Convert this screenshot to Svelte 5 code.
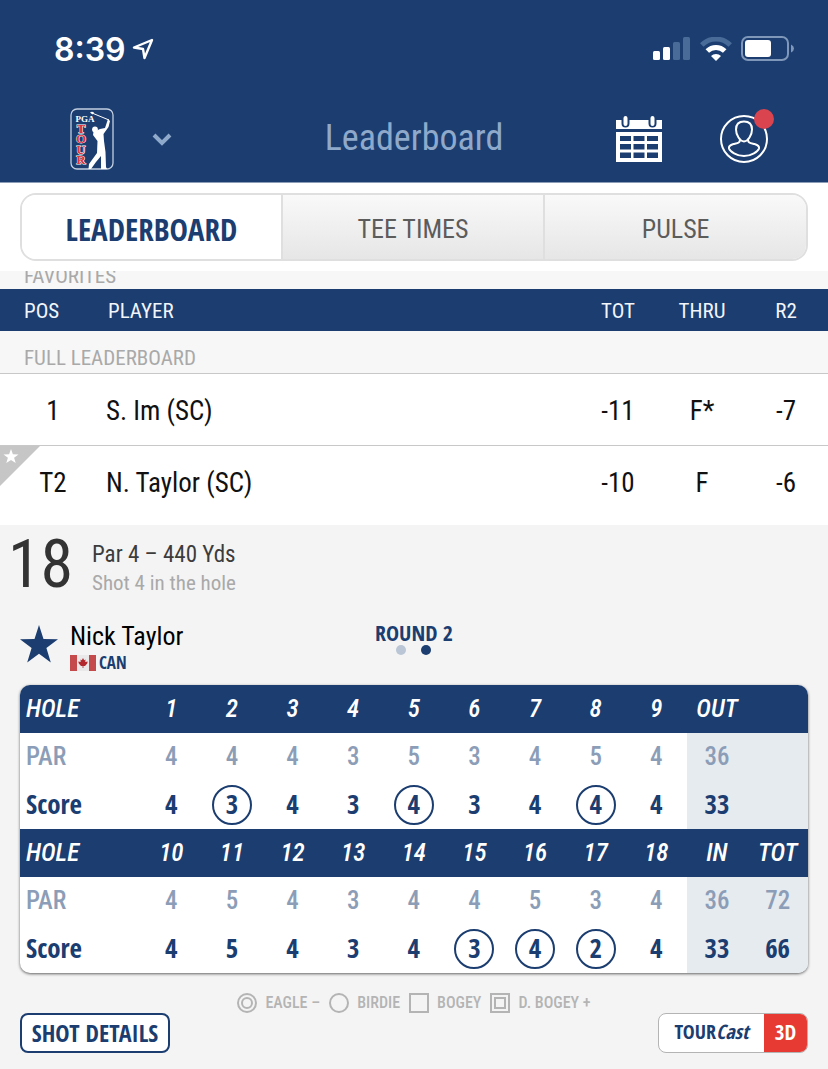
<script lang="ts">
  type Player = {
    pos: string;
    name: string;
    total: string;
    thru: string;
    round: string;
    favorite?: boolean;
  };

  type Nine = {
    holes: number[];
    par: number[];
    score: number[];
    label: string;
    parSum: number;
    scoreSum: number;
    parTotal?: number;
    scoreTotal?: number;
  };

  const tabs = ["LEADERBOARD", "TEE TIMES", "PULSE"];
  let activeTab = $state("LEADERBOARD");

  const rounds = [1, 2];
  let round = $state(2);

  const players: Player[] = [
    { pos: "1", name: "S. Im (SC)", total: "-11", thru: "F*", round: "-7" },
    { pos: "T2", name: "N. Taylor (SC)", total: "-10", thru: "F", round: "-6", favorite: true },
  ];

  const nines: Nine[] = [
    {
      holes: [1, 2, 3, 4, 5, 6, 7, 8, 9],
      par: [4, 4, 4, 3, 5, 3, 4, 5, 4],
      score: [4, 3, 4, 3, 4, 3, 4, 4, 4],
      label: "OUT",
      parSum: 36,
      scoreSum: 33,
    },
    {
      holes: [10, 11, 12, 13, 14, 15, 16, 17, 18],
      par: [4, 5, 4, 3, 4, 4, 5, 3, 4],
      score: [4, 5, 4, 3, 4, 3, 4, 2, 4],
      label: "IN",
      parSum: 36,
      scoreSum: 33,
      parTotal: 72,
      scoreTotal: 66,
    },
  ];
</script>

<div class="app">
  <header>
    <div class="status">
      <div class="clock">
        <span>8:39</span>
        <svg width="22" height="22" viewBox="0 0 22 22" aria-hidden="true">
          <path d="M20 2 L2 9.5 L11 11 L12.500 20 Z" fill="none" stroke="#fff" stroke-width="2.400" stroke-linejoin="round" />
        </svg>
      </div>
      <div class="signals">
        <svg width="38" height="24" viewBox="0 0 38 24" aria-hidden="true">
          <rect x="0" y="14" width="7" height="9" rx="1.500" fill="#fff" />
          <rect x="10" y="10" width="7" height="13" rx="1.500" fill="#fff" />
          <rect x="20" y="5" width="7" height="18" rx="1.500" fill="#486b98" />
          <rect x="30" y="0" width="7" height="23" rx="1.500" fill="#486b98" />
        </svg>
        <svg width="32" height="24" viewBox="0 0 32 24" aria-hidden="true">
          <path d="M1.800 8 A20 20 0 0 1 30.200 8" fill="none" stroke="#486b98" stroke-width="5" />
          <path d="M7.300 14 A12.500 12.500 0 0 1 24.700 14" fill="none" stroke="#fff" stroke-width="5" />
          <path d="M16 24 L11 19 A7 7 0 0 1 21 19 Z" fill="#fff" />
        </svg>
        <svg width="53" height="26" viewBox="0 0 53 26" aria-hidden="true">
          <rect x="1" y="1" width="46" height="23" rx="6" fill="none" stroke="#7f98b9" stroke-width="2" />
          <rect x="4" y="4" width="26" height="17" rx="3" fill="#fff" />
          <path d="M50 8.500 Q53 10 53 12.500 Q53 15 50 16.500 Z" fill="#7f98b9" />
        </svg>
      </div>
    </div>

    <div class="bar">
      <button class="brand" aria-label="Choose tour">
        <svg width="44" height="62" viewBox="0 0 44 62" aria-hidden="true">
          <rect x="1" y="1" width="42" height="60" rx="6" fill="none" stroke="#c3cfe0" stroke-width="1.300" />
          <g font-family="'Liberation Serif', serif" font-weight="bold" text-anchor="middle">
            <text x="15" y="14" font-size="9" fill="#fff">PGA</text>
            <g font-size="13" fill="#e0313c" stroke="#fff" stroke-width="1" paint-order="stroke">
              <text x="11" y="25">T</text>
              <text x="11" y="35">O</text>
              <text x="11" y="46">U</text>
              <text x="11" y="56">R</text>
            </g>
          </g>
          <path d="M22 5 L39 12" fill="none" stroke="#fff" stroke-width="1" />
          <path d="M20 4.500 Q22 3 24 4.500 L22.500 6.500 Z" fill="#fff" />
          <circle cx="25" cy="21.500" r="2.900" fill="#fff" />
          <path d="M38 11 L40 13 L38.500 19 L33.500 26 L34 33 L35.500 44 L36 59 L37 61 L31 61 L31 48 L26 54 L21 61 L18.500 61 L19 56 L27 45 L27.500 33 L23 27 L23.500 24 L30 21 L35 20 L37 14 Z" fill="#fff" />
        </svg>
        <svg width="20" height="14" viewBox="0 0 20 14" aria-hidden="true">
          <path d="M2 3 L10 11 L18 3" fill="none" stroke="#8fa9cb" stroke-width="4" />
        </svg>
      </button>
      <h1>Leaderboard</h1>
      <div class="actions">
        <button aria-label="Schedule">
          <svg width="46" height="47" viewBox="0 0 46 47" aria-hidden="true">
            <rect x="0" y="4" width="46" height="9" fill="#fff" />
            <g stroke-linecap="round">
              <path d="M9.500 3 V7.500 M36.500 3 V7.500" stroke="#1b3d70" stroke-width="8" />
              <path d="M9.500 2 V8 M36.500 2 V8" stroke="#fff" stroke-width="4" />
            </g>
            <path fill-rule="evenodd" fill="#fff" d="M0 16 H46 V46 H0 Z M4 20 V25 H15 V20 Z M17.500 20 V25 H28.500 V20 Z M31 20 V25 H42 V20 Z M4 28 V33.500 H15 V28 Z M17.500 28 V33.500 H28.500 V28 Z M31 28 V33.500 H42 V28 Z M4 36.500 V42 H15 V36.500 Z M17.500 36.500 V42 H28.500 V36.500 Z M31 36.500 V42 H42 V36.500 Z" />
          </svg>
        </button>
        <button class="profile" aria-label="Profile">
          <svg width="48" height="48" viewBox="0 0 48 48" aria-hidden="true">
            <g fill="none" stroke="#fff" stroke-width="2">
              <circle cx="24" cy="24" r="23" />
              <path d="M24 6.500 C18.500 6.500 16 10 16 14.500 C16 20 20 26.500 24 26.500 C28 26.500 32 20 32 14.500 C32 10 29.500 6.500 24 6.500 Z" />
              <path d="M20 24.500 C20 28 18 28 13.500 29 C10 30 8.500 31 9 33.500 C10 36.500 16.500 41 24 41 C31.500 41 38 36.500 39 33.500 C39.500 31 38 30 34.500 29 C30 28 28 28 28 24.500" />
            </g>
          </svg>
          <span class="badge"></span>
        </button>
      </div>
    </div>
  </header>

  <nav>
    <div class="tabs">
      {#each tabs as tab}
        <button class:active={activeTab === tab} onclick={() => (activeTab = tab)}>{tab}</button>
      {/each}
    </div>
  </nav>

  <!-- scrolled half under the tab bar -->
  <div class="favorites"><span>FAVORITES</span></div>

  <table class="board">
    <thead>
      <tr>
        <th class="pos">POS</th>
        <th class="player">PLAYER</th>
        <th>TOT</th>
        <th>THRU</th>
        <th>R2</th>
      </tr>
    </thead>
    <tbody>
      <tr class="section"><td colspan="5">FULL LEADERBOARD</td></tr>
      {#each players as p}
        <tr class="row" class:favorite={p.favorite}>
          <td class="pos">
            {#if p.favorite}
              <svg class="corner" width="40" height="40" viewBox="0 0 40 40" aria-hidden="true">
                <path d="M0 0 H40 L0 40 Z" fill="#c6c6c6" />
                <path d="M11 3 L12.900 8.200 L18.500 8.400 L14.100 11.800 L15.700 17.100 L11 14 L6.300 17.100 L7.900 11.800 L3.500 8.400 L9.100 8.200 Z" fill="#fff" />
              </svg>
            {/if}
            {p.pos}
          </td>
          <td class="player">{p.name}</td>
          <td>{p.total}</td>
          <td>{p.thru}</td>
          <td>{p.round}</td>
        </tr>
      {/each}
    </tbody>
  </table>

  <main>
    <section class="hole">
      <span class="number">18</span>
      <div class="lie">
        <p class="yards">Par 4 – 440 Yds</p>
        <p class="shot">Shot 4 in the hole</p>
      </div>
    </section>

    <section class="profile-row">
      <div class="who">
        <svg width="38" height="38" viewBox="0 0 38 38" aria-hidden="true">
          <path d="M19 0 L23.500 14 L38 14.300 L26.400 23 L30.800 37.500 L19 28.700 L7.200 37.500 L11.600 23 L0 14.300 L14.500 14 Z" fill="#1b3d70" />
        </svg>
        <div>
          <h2>Nick Taylor</h2>
          <div class="country">
            <svg width="26" height="16" viewBox="0 0 26 16" aria-hidden="true">
              <rect width="26" height="16" fill="#e9e9ea" />
              <rect width="7" height="16" fill="#c44a4c" />
              <rect x="19" width="7" height="16" fill="#c44a4c" />
              <path d="M13 3 L14.200 5.200 L15.500 4.600 L15.300 7 L17.700 6.500 L17.200 8.500 L15 11 H13.400 V13 H12.600 V11 H11 L8.800 8.500 L8.300 6.500 L10.700 7 L10.500 4.600 L11.800 5.200 Z" fill="#b3282d" />
            </svg>
            <span>CAN</span>
          </div>
        </div>
      </div>
      <div class="round">
        <span>ROUND {round}</span>
        <div class="dots">
          {#each rounds as r}
            <button class:active={r === round} onclick={() => (round = r)} aria-label="Round {r}"></button>
          {/each}
        </div>
      </div>
    </section>

    <table class="card">
      {#each nines as nine}
        <tbody>
          <tr class="holes">
            <th>HOLE</th>
            {#each nine.holes as h}<td>{h}</td>{/each}
            <td>{nine.label}</td>
            <td>{nine.parTotal ? "TOT" : ""}</td>
          </tr>
          <tr class="par">
            <th>PAR</th>
            {#each nine.par as v}<td>{v}</td>{/each}
            <td class="sum">{nine.parSum}</td>
            <td class="sum">{nine.parTotal ?? ""}</td>
          </tr>
          <tr class="score">
            <th>Score</th>
            {#each nine.score as v, i}
              <td><span class:birdie={v < nine.par[i]}>{v}</span></td>
            {/each}
            <td class="sum">{nine.scoreSum}</td>
            <td class="sum">{nine.scoreTotal ?? ""}</td>
          </tr>
        </tbody>
      {/each}
    </table>

    <ul class="legend">
      <li><i class="circle double"></i>EAGLE –</li>
      <li><i class="circle"></i>BIRDIE</li>
      <li><i></i>BOGEY</li>
      <li><i class="double"></i>D. BOGEY +</li>
    </ul>

    <div class="buttons">
      <button class="details">SHOT DETAILS</button>
      <button class="cast">
        <span class="cast-name">TOUR<em>Cast</em></span>
        <span class="cast-3d">3D</span>
      </button>
    </div>
  </main>
</div>

<style>
  :global(body) {
    margin: 0;
    background: #f4f4f4;
  }
  .app {
    --navy: #1b3d70;
    --grey: #a9a9a9;
    --bold: "Open Sans Condensed", "Roboto Condensed", sans-serif;
    font-family: "Roboto Condensed", "Open Sans Condensed", sans-serif;
    line-height: 1.2;
    color: #111;
  }
  button {
    padding: 0;
    border: 0;
    background: none;
    font: inherit;
    color: inherit;
    cursor: pointer;
  }
  svg {
    display: block;
  }
  h1,
  h2,
  p,
  ul {
    margin: 0;
    padding: 0;
    font-weight: 400;
  }
  header {
    background: var(--navy);
    border-bottom: 1px solid #8c9db7;
  }
  .status {
    display: flex;
    justify-content: space-between;
    align-items: center;
    height: 94px;
    padding: 2px 34px 0 54px;
  }
  .clock {
    display: flex;
    align-items: center;
    gap: 6px;
    color: #fff;
    font: 600 32px Inter, sans-serif;
  }
  .signals {
    display: flex;
    align-items: center;
    gap: 9px;
  }
  .bar {
    display: grid;
    grid-template-columns: 1fr auto 1fr;
    align-items: center;
    height: 86px;
    padding: 0 60px 0 70px;
  }
  .brand {
    display: flex;
    align-items: center;
    gap: 38px;
  }
  h1 {
    margin-right: 10px;
    color: #8fa9cb;
    font-size: 36px;
  }
  .actions {
    display: flex;
    justify-content: flex-end;
    align-items: center;
    gap: 58px;
  }
  .profile {
    position: relative;
  }
  .badge {
    position: absolute;
    top: -6px;
    right: -6px;
    width: 20px;
    height: 20px;
    border-radius: 50%;
    background: #d9444f;
  }
  nav {
    padding: 10px 20px;
    background: #fff;
  }
  .tabs {
    display: grid;
    grid-template-columns: 65fr 66fr 66fr;
    height: 64px;
    border: 2px solid #dfdfdf;
    border-radius: 16px;
    overflow: hidden;
  }
  .tabs button {
    background: linear-gradient(#f9f9f9, #e6e6e6);
    color: #5c5c5c;
    font-size: 26px;
    padding-top: 5px;
  }
  .tabs button + button {
    border-left: 2px solid #dfdfdf;
  }
  .tabs .active {
    background: #fff;
    color: var(--navy);
    font-family: var(--bold);
    font-size: 31px;
    font-weight: 700;
  }
  .favorites {
    display: flex;
    align-items: flex-end;
    height: 18px;
    padding: 0 24px;
    overflow: hidden;
    background: #f7f7f7;
    color: var(--grey);
    font-size: 21px;
    line-height: 26px;
  }
  table {
    width: 100%;
    border-collapse: collapse;
    table-layout: fixed;
  }
  th,
  td {
    padding: 0;
    font-weight: 400;
    text-align: center;
  }
  .board {
    background: #fff;
  }
  .board th {
    width: 84px;
    height: 42px;
    padding-top: 4px;
    box-sizing: border-box;
    background: var(--navy);
    color: #f2f5fa;
    font-size: 21px;
  }
  .board th.pos {
    width: 106px;
    padding-left: 24px;
    text-align: left;
  }
  .board th.player {
    width: auto;
    padding-left: 2px;
  }
  .board .player {
    text-align: left;
  }
  .section td {
    height: 42px;
    padding: 14px 24px 0;
    box-sizing: border-box;
    background: #f7f7f7;
    color: var(--grey);
    font-size: 21px;
    text-align: left;
  }
  .row td {
    height: 67px;
    padding-top: 4px;
    border-top: 1px solid #c8c8c8;
    font-size: 27px;
  }
  .row.favorite td {
    height: 75px;
    padding: 0 0 4px;
  }
  td.pos {
    position: relative;
  }
  .corner {
    position: absolute;
    top: 0;
    left: 0;
  }
  main {
    padding: 0 20px 16px;
    background: #f4f4f4;
  }
  .hole {
    display: flex;
    align-items: center;
    height: 80px;
    margin-left: -12px;
  }
  .number {
    width: 84px;
    color: #333;
    font-size: 66px;
  }
  .lie {
    padding-top: 6px;
  }
  .yards {
    color: #3c3c3c;
    font-size: 23px;
    line-height: 30px;
  }
  .shot {
    color: var(--grey);
    font-size: 21px;
    line-height: 26px;
  }
  .profile-row {
    display: grid;
    grid-template-columns: 1fr auto 1fr;
    height: 80px;
    padding-top: 14px;
    box-sizing: border-box;
  }
  .who {
    display: flex;
    align-items: flex-start;
    gap: 12px;
  }
  .who > svg {
    margin-top: 6px;
  }
  h2 {
    color: #000;
    font-size: 26px;
    line-height: 34px;
  }
  .country {
    display: flex;
    align-items: center;
    gap: 3px;
    color: var(--navy);
    font-family: var(--bold);
    font-size: 17px;
    font-weight: 700;
    line-height: 20px;
  }
  .round {
    color: var(--navy);
    font-family: var(--bold);
    font-size: 22px;
    font-weight: 700;
    line-height: 26px;
  }
  .dots {
    display: flex;
    justify-content: center;
    gap: 15px;
  }
  .dots button {
    width: 10px;
    height: 10px;
    border-radius: 50%;
    background: #bac6d6;
  }
  .dots .active {
    background: var(--navy);
  }
  .card {
    border-radius: 10px;
    overflow: hidden;
    background: #fff;
    color: var(--navy);
    box-shadow: 0 1px 3px rgba(0, 0, 0, 0.6);
    font-size: 25px;
  }
  .card th,
  .card td {
    height: 48px;
  }
  .card th {
    width: 115px;
    padding-left: 6px;
    text-align: left;
  }
  .holes {
    background: var(--navy);
    color: #fff;
    font-style: italic;
  }
  .card .holes > * {
    font-weight: 500;
  }
  .card .par > * {
    color: #8c9db7;
    font-weight: 500;
  }
  .card .score > * {
    font-family: var(--bold);
    font-size: 27px;
    font-weight: 700;
  }
  .card .sum {
    background: #e6ebf0;
  }
  .birdie {
    display: block;
    box-sizing: border-box;
    width: 40px;
    height: 40px;
    margin: 0 auto;
    border: 2px solid var(--navy);
    border-radius: 50%;
    line-height: 34px;
  }
  .legend {
    display: flex;
    justify-content: center;
    gap: 9px;
    margin-top: 20px;
    color: #b4b4b4;
    font-size: 16px;
    font-weight: 500;
    line-height: 20px;
    list-style: none;
  }
  .legend li {
    display: flex;
    align-items: center;
    gap: 8px;
  }
  .legend i {
    box-sizing: border-box;
    width: 20px;
    height: 20px;
    border: 2px solid #b4b4b4;
  }
  .legend .circle {
    border-radius: 50%;
  }
  .legend .double {
    padding: 2px;
  }
  .legend .double::before {
    content: "";
    display: block;
    box-sizing: border-box;
    height: 12px;
    border: 2px solid #b4b4b4;
    border-radius: inherit;
  }
  .buttons {
    display: flex;
    justify-content: space-between;
  }
  .buttons button {
    box-sizing: border-box;
    width: 150px;
    height: 40px;
    border-radius: 8px;
    background: #fff;
    color: var(--navy);
    font-family: var(--bold);
    font-weight: 700;
    line-height: 36px;
  }
  .buttons .details {
    border: 2px solid var(--navy);
    font-size: 24px;
    line-height: 34px;
  }
  .buttons .cast {
    display: flex;
    border: 1px solid #b4b4b4;
    overflow: hidden;
  }
  .cast-name {
    flex: 1;
    font-size: 20px;
  }
  .cast-3d {
    width: 43px;
    height: 38px;
    background: #e63a32;
    color: #fff;
    font-size: 21px;
  }
</style>
